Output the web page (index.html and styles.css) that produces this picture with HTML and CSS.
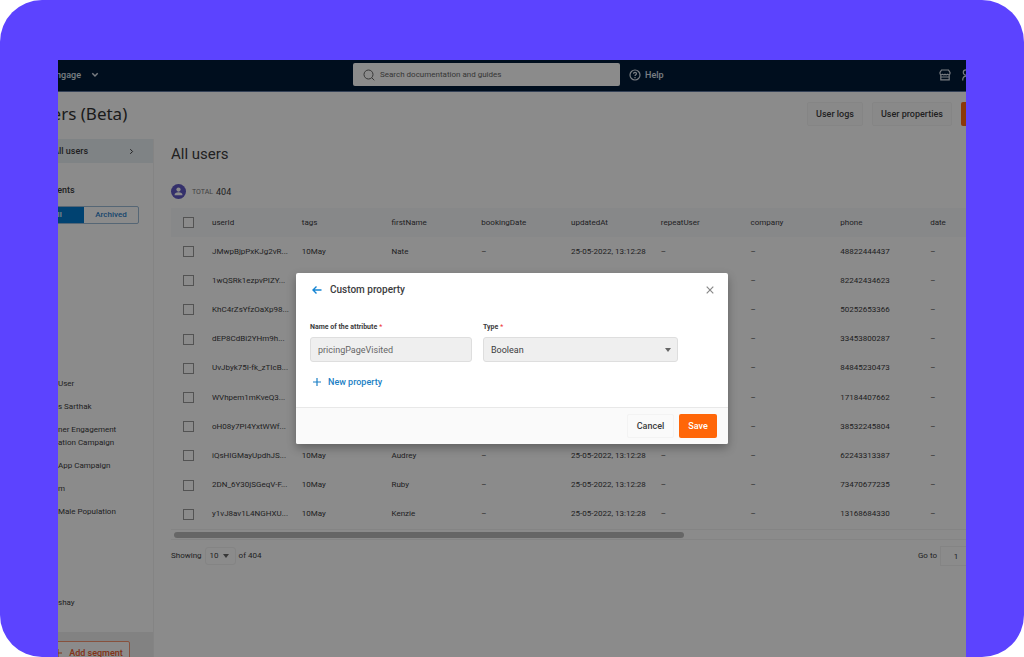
FILE: index.html
```html
<!DOCTYPE html>
<html lang="en">
<head>
<meta charset="utf-8">
<title>Users – Custom property</title>
<link rel="stylesheet" href="styles.css">
</head>
<body>
<div class="frame">
<div class="app">
<div class="workspace">
  <header class="topbar">
    <button class="product">Engage
      <svg width="8" height="6" viewBox="0 0 8 6" fill="none" stroke="currentColor" stroke-width="1.5"><path d="M1.3 1.3 4 4l2.700-2.700"/></svg>
    </button>
    <label class="search">
      <svg width="12" height="12" viewBox="0 0 12 12" fill="none" stroke="currentColor"><circle cx="5.500" cy="5.500" r="4.500"/><path d="m8.800 8.800 2.500 2.500"/></svg>
      <input type="search" placeholder="Search documentation and guides" aria-label="Search documentation and guides">
    </label>
    <a class="help" href="#">
      <svg width="12" height="12" viewBox="0 0 12 12" fill="none" stroke="currentColor" stroke-width="1.200"><circle cx="6" cy="6" r="5"/><path d="M4.500 4.800c0-2 3-2 3 0 0 1-1.500 1-1.500 2.200M6 8v1.200"/></svg>
      Help
    </a>
    <div class="tools">
      <button aria-label="Marketplace"><svg width="12" height="12" viewBox="0 0 12 12" fill="none" stroke="currentColor" stroke-width="1.200"><path d="M2.500 1h7L11 3.500v1c0 1.600-2.400 1.600-2.500.3-.2 1.300-2.300 1.300-2.500 0-.2 1.300-2.300 1.300-2.500 0C3.400 6.100 1 6.100 1 4.500v-1zM1.800 6v4.900h8.400V6M1.800 8h8.400"/></svg></button>
      <button aria-label="Account"><svg width="12" height="12" viewBox="0 0 12 12" fill="none" stroke="currentColor" stroke-width="1.200"><circle cx="4" cy="3.500" r="2.700"/><path d="M.7 11.500c0-2.700 1-4.300 3.300-4.300s3.300 1.600 3.300 4.300"/></svg></button>
    </div>
  </header>
  <div class="pagehead">
    <h1>Users (Beta)</h1>
    <div class="actions">
      <button class="btn">User logs</button>
      <button class="btn">User properties</button>
      <button class="btn primary" aria-label="Create user"></button>
    </div>
  </div>
  <div class="columns">
    <aside class="sidebar">
      <a class="current" href="#">All users
        <svg width="5" height="7" viewBox="0 0 6 8" fill="none" stroke="currentColor" stroke-width="1.200"><path d="m1.500 1.200 2.800 2.800-2.800 2.800"/></svg>
      </a>
      <h2>Segments</h2>
      <div class="tabs"><button class="on">All</button><button>Archived</button></div>
      <ul class="segments">
        <li>User</li>
        <li>s Sarthak</li>
        <li>ner Engagement<br>ation Campaign</li>
        <li>App Campaign</li>
        <li>m</li>
        <li>Male Population</li>
        <li class="late">shay</li>
      </ul>
      <div class="sidefoot"><button><svg width="8" height="8" viewBox="0 0 8 8" stroke="currentColor"><path d="M4 0v8M0 4h8"/></svg>Add segment</button></div>
    </aside>
    <main class="main">
      <h2>All users</h2>
      <div class="total">
        <svg width="15" height="15" viewBox="0 0 15 15"><circle cx="7.500" cy="7.500" r="7.500" fill="#6058c4"/><circle cx="7.500" cy="5.600" r="2.100" fill="#fff"/><path d="M3.500 11.200c0-2.200 1.600-2.900 4-2.900s4 .7 4 2.900z" fill="#fff"/></svg>
        <small>TOTAL</small><span>404</span>
      </div>
      <table class="grid">
        <colgroup><col class="pick"><col><col><col><col><col><col><col><col><col></colgroup>
        <thead><tr><th><input type="checkbox" aria-label="Select all"></th><th>userId</th><th>tags</th><th>firstName</th><th>bookingDate</th><th>updatedAt</th><th>repeatUser</th><th>company</th><th>phone</th><th>date</th></tr></thead>
        <tbody>
          <tr><td><input type="checkbox" aria-label="Select row"></td><td>JMwpBjpPxKJg2vR...</td><td>10May</td><td>Nate</td><td>–</td><td>25-05-2022, 13:12:28</td><td>–</td><td>–</td><td>48822444437</td><td>–</td></tr>
          <tr><td><input type="checkbox" aria-label="Select row"></td><td>1wQSRk1ezpvPIZY...</td><td></td><td></td><td></td><td></td><td></td><td>–</td><td>82242434623</td><td>–</td></tr>
          <tr><td><input type="checkbox" aria-label="Select row"></td><td>KhC4rZsYfzOaXp98...</td><td></td><td></td><td></td><td></td><td></td><td>–</td><td>50252653366</td><td>–</td></tr>
          <tr><td><input type="checkbox" aria-label="Select row"></td><td>dEP8CdBi2YHm9h...</td><td></td><td></td><td></td><td></td><td></td><td>–</td><td>33453800287</td><td>–</td></tr>
          <tr><td><input type="checkbox" aria-label="Select row"></td><td>UvJbyk75I-fk_zTIcB...</td><td></td><td></td><td></td><td></td><td></td><td>–</td><td>84845230473</td><td>–</td></tr>
          <tr><td><input type="checkbox" aria-label="Select row"></td><td>WVhpem1mKveQ3...</td><td></td><td></td><td></td><td></td><td></td><td>–</td><td>17184407662</td><td>–</td></tr>
          <tr><td><input type="checkbox" aria-label="Select row"></td><td>oH08y7PI4YxtWWf...</td><td></td><td></td><td></td><td></td><td></td><td>–</td><td>38532245804</td><td>–</td></tr>
          <tr><td><input type="checkbox" aria-label="Select row"></td><td>iQsHIGMayUpdhJS...</td><td>10May</td><td>Audrey</td><td>–</td><td>25-05-2022, 13:12:28</td><td>–</td><td>–</td><td>62243313387</td><td>–</td></tr>
          <tr><td><input type="checkbox" aria-label="Select row"></td><td>2DN_6Y30jSGeqV-F...</td><td>10May</td><td>Ruby</td><td>–</td><td>25-05-2022, 13:12:28</td><td>–</td><td>–</td><td>73470677235</td><td>–</td></tr>
          <tr><td><input type="checkbox" aria-label="Select row"></td><td>y1vJ8av1L4NGHXU...</td><td>10May</td><td>Kenzie</td><td>–</td><td>25-05-2022, 13:12:28</td><td>–</td><td>–</td><td>13168684330</td><td>–</td></tr>
        </tbody>
      </table>
      <div class="scroll"><div class="thumb"></div></div>
      <div class="pager">
        <label for="size">Showing</label>
        <span class="drop small"><select id="size"><option>10</option></select><svg width="6" height="4" viewBox="0 0 6 4"><path d="M0 0h6L3 4z" fill="currentColor"/></svg></span>
        <span>of 404</span>
        <label class="goto" for="page">Go to</label>
        <input id="page" type="text" value="1">
      </div>
    </main>
  </div>
</div>
<div class="overlay">
  <form class="modal" role="dialog" aria-labelledby="title">
    <div class="modalhead">
      <button type="button" class="back" aria-label="Back"><svg width="10" height="8" viewBox="0 0 10 8" fill="none" stroke="currentColor" stroke-width="1.400"><path d="M9.500 4H1M4.500.5 1 4l3.500 3.500"/></svg></button>
      <h2 id="title">Custom property</h2>
      <button type="button" class="close" aria-label="Close"><svg width="8" height="8" viewBox="0 0 8 8" stroke="currentColor" stroke-width="1.200"><path d="m.7.7 6.600 6.600M7.300.7.7 7.300"/></svg></button>
    </div>
    <div class="fields">
      <div class="field"><label for="name">Name of the attribute<i>*</i></label><input id="name" type="text" value="pricingPageVisited"></div>
      <div class="field wide"><label for="type">Type<i>*</i></label><span class="drop"><select id="type"><option>Boolean</option></select><svg width="6" height="4" viewBox="0 0 6 4"><path d="M0 0h6L3 4z" fill="currentColor"/></svg></span></div>
    </div>
    <button type="button" class="add"><svg width="8" height="8" viewBox="0 0 8 8" stroke="currentColor" stroke-width="1.200"><path d="M4 0v8M0 4h8"/></svg>New property</button>
    <div class="modalfoot"><button type="button" class="cancel">Cancel</button><button type="submit" class="save">Save</button></div>
  </form>
</div>
</div>
</div>
</body>
</html>
```
FILE: styles.css
```css
* { box-sizing: border-box; }
body { margin: 0; background: #fff; }
body, button, input, select { font-family: Roboto, "Liberation Sans", sans-serif; font-size: 8px; line-height: 12px; color: #3c3c3e; }
button { border: 0; padding: 0; background: none; }
h1, h2, ul { margin: 0; padding: 0; }
a { color: inherit; text-decoration: none; }
svg { display: block; flex: none; }

.frame { height: 100vh; padding: 60px 58px 0; background: #5c43ff; border-radius: 42px; display: flex; }
.app { flex: 1; min-width: 0; position: relative; overflow: hidden; background: #fff; }
.workspace { height: 100%; margin: 0 -60px 0 -40px; display: flex; flex-direction: column; }

.topbar { flex: none; height: 32px; padding-bottom: 2px; display: flex; align-items: center; background: #001a38; border-bottom: 1px solid #60779f; color: #dfe5ee; }
.product { flex: 0 0 335px; padding-left: 33px; display: flex; align-items: center; gap: 10px; color: inherit; font-size: 9px; font-weight: 500; }
.search { flex: 0 0 267px; height: 23px; padding: 0 10px; display: flex; align-items: center; gap: 5px; background: #fff; border-radius: 2px; color: #666; }
.search input { flex: 1; min-width: 0; border: 0; padding: 0; outline: 0; background: none; }
.search input::placeholder { color: #666; opacity: 1; }
.help { margin-left: 9px; display: flex; align-items: center; gap: 4px; font-size: 9px; font-weight: 500; }
.tools { margin-left: auto; padding-right: 52px; display: flex; gap: 11px; }
.tools button { color: inherit; }

.pagehead { flex: none; height: 47px; padding: 0 10px 4px 13px; display: flex; align-items: center; justify-content: space-between; }
.pagehead h1 { font: 400 17px/24px "Noto Sans", sans-serif; color: #333; }
.actions { display: flex; gap: 9px; }
.btn { height: 24px; padding: 0 8px; border: 1px solid #f5f5f5; border-radius: 2px; background: #fcfcfc; font-size: 9px; font-weight: 500; }
.btn.primary { width: 55px; border: 0; background: #ff6a13; }

.columns { flex: 1; min-height: 0; display: flex; }
.sidebar { flex: 0 0 136px; display: flex; flex-direction: column; border-right: 1px solid #f3f3f3; }
.current { height: 24px; padding: 0 19px 0 35px; display: flex; align-items: center; justify-content: space-between; background: #e9f0f5; font-size: 9px; font-weight: 500; }
.sidebar h2 { margin: 21px 0 10px 16px; font-size: 9px; line-height: 12px; font-weight: 500; }
.tabs { height: 18px; margin: 0 14px 0 11px; display: grid; grid-template-columns: 1fr 1fr; border: 1px solid #9dbbd6; border-radius: 2px; }
.tabs button { color: #2e7fc9; font-weight: 500; }
.tabs .on { background: #0079cf; color: #fff; }
.segments { margin: 153px 0 0 40px; display: grid; gap: 10px; list-style: none; line-height: 13px; }
.late { margin-top: 68px; }
.sidefoot { flex: none; height: 25px; margin-top: auto; padding: 9px 23px 0 29px; background: #efefef; overflow: hidden; }
.sidefoot button { width: 100%; height: 24px; display: flex; align-items: center; justify-content: center; gap: 7px; border: 1px solid #f79571; border-radius: 2px; background: #fff; color: #ed5c2c; font-weight: 500; font-size: 9px; }

.main { flex: 1; min-width: 0; padding: 5px 0 0 17px; }
.main h2 { font-size: 15px; line-height: 20px; font-weight: 400; }
.total { height: 15px; margin: 20px 0 9px; display: flex; align-items: center; gap: 6px; }
.total small { font-size: 7px; color: #777; }
.total span { font-size: 9px; margin-left: -3px; }
.grid { width: 849px; height: 321px; table-layout: fixed; border-collapse: collapse; }
.grid .pick { width: 41px; }
.grid thead tr { height: 29px; background: #f8f9fc; }
.grid th, .grid td { padding: 0; text-align: left; font-weight: 400; white-space: nowrap; vertical-align: middle; }
.grid th:first-child, .grid td:first-child { padding-left: 12px; }
.grid input { appearance: none; display: block; width: 11px; height: 11px; margin: 0; border: 1px solid #999; background: #fff; }
.scroll { height: 11px; padding: 2px 3px; border: 1px solid #f2f2f2; border-width: 1px 0; }
.thumb { width: 510px; height: 6px; border-radius: 3px; background: #bcbcbc; }
.pager { height: 20px; margin-top: 6px; padding-right: 54px; display: flex; align-items: center; gap: 3px; }
.drop { position: relative; display: block; }
.drop svg { position: absolute; right: 7px; top: 50%; margin-top: -2px; color: #666; pointer-events: none; }
.drop select { appearance: none; width: 100%; height: 25px; padding: 0 7px; border: 1px solid #dedede; border-radius: 3px; background: #efefef; }
.drop.small select { width: 31px; height: 18px; padding: 0 4px; border-color: #f2f2f2; background: #fff; }
.goto { margin-left: auto; }
.pager input { width: 32px; height: 20px; padding: 0; border: 1px solid #f2f2f2; text-align: center; background: #fff; }

.overlay { position: absolute; inset: 0; display: grid; place-items: center; background: rgba(0, 0, 0, .455); }
.modal { width: 432px; background: #fff; border-radius: 2px; box-shadow: 0 4px 10px rgba(0, 0, 0, .3); overflow: hidden; }
.modalhead { height: 33px; padding: 0 14px 0 16px; display: flex; align-items: center; gap: 8px; }
.modalhead h2 { flex: 1; font-size: 10px; line-height: 14px; font-weight: 500; }
.back { color: #1685d3; }
.close { color: #888; }
.fields { padding: 15px 14px 0; display: flex; gap: 11px; }
.field { width: 162px; }
.field.wide { width: 195px; }
.field label { display: block; margin-bottom: 4px; font-size: 7px; font-weight: 700; }
.field i { margin-left: 2px; font-style: normal; font-weight: 400; color: #e33; }
.field input { display: block; width: 100%; height: 25px; padding: 0 7px; border: 1px solid #dedede; border-radius: 3px; background: #efefef; font-size: 9px; color: #666; }
.field select { font-size: 9px; }
.add { margin: 14px 0 19px 17px; display: flex; align-items: center; gap: 7px; color: #1b7fc5; font-size: 9px; font-weight: 500; }
.modalfoot { height: 37px; padding: 0 11px; display: flex; align-items: center; justify-content: flex-end; gap: 5px; border-top: 1px solid #e8e8e8; background: #fafafa; }
.modalfoot button { height: 24px; border-radius: 2px; font-size: 9px; font-weight: 500; }
.modalfoot .cancel { width: 47px; border: 1px solid #f3f3f3; }
.modalfoot .save { width: 38px; background: #ff6608; color: #fff; }
```
